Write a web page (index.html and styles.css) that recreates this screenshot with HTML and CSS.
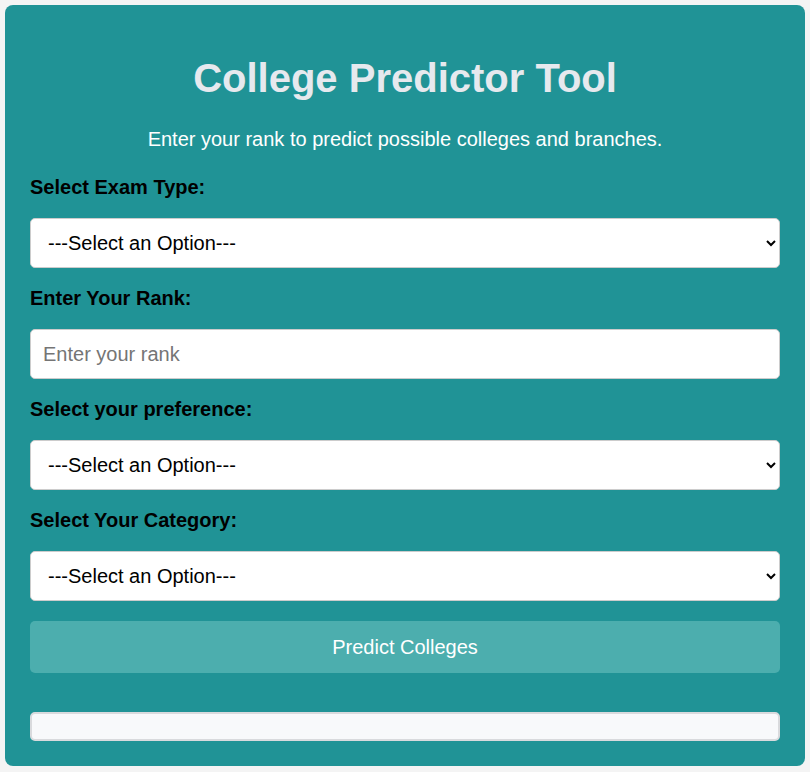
FILE: index.html
```html
<!DOCTYPE html>
<html lang="en">
<head>
<meta charset="utf-8">
<title>College Predictor Tool</title>
<link rel="stylesheet" href="styles.css">
</head>
<body>
<div class="card">
  <h1 class="title">College Predictor Tool</h1>
  <p class="subtitle">Enter your rank to predict possible colleges and branches.</p>
  <form class="form">
    <label class="label" for="exam">Select Exam Type:</label>
    <select class="field select" id="exam"><option>---Select an Option---</option></select>
    <label class="label" for="rank">Enter Your Rank:</label>
    <input class="field" id="rank" type="text" placeholder="Enter your rank">
    <label class="label" for="pref">Select your preference:</label>
    <select class="field select" id="pref"><option>---Select an Option---</option></select>
    <label class="label" for="cat">Select Your Category:</label>
    <select class="field select" id="cat"><option>---Select an Option---</option></select>
    <button class="btn" type="button">Predict Colleges</button>
  </form>
  <div class="result"></div>
</div>
</body>
</html>
```
FILE: styles.css
```css
html, body {
  margin: 0;
  padding: 0;
}
body {
  background: #f4f4f4;
  font-family: "Liberation Sans", Arial, sans-serif;
  padding: 5px;
}
.card {
  background: #209396;
  border-radius: 8px;
  padding: 50px 25px 25px;
  width: 800px;
  box-sizing: border-box;
}
.title {
  margin: 0;
  text-align: center;
  color: #e6e9ee;
  font-size: 40px;
  line-height: 46px;
  font-weight: bold;
}
.subtitle {
  margin: 26px 0 0;
  text-align: center;
  color: #ffffff;
  font-size: 20px;
  line-height: 24px;
}
.form {
  display: flex;
  flex-direction: column;
  gap: 20px;
  margin-top: 26px;
}
.label {
  font-size: 20px;
  line-height: 21px;
  font-weight: bold;
  color: #000;
  margin-top: 0;
}
.field {
  height: 50px;
  box-sizing: border-box;
  border: 1px solid #cccccc;
  border-radius: 5px;
  background: #ffffff;
  font-family: "Liberation Sans", Arial, sans-serif;
  font-size: 20px;
  color: #000;
  padding: 0 12px;
  margin: 0;
  width: 100%;
}
.select {
  padding: 0 12px 0 13px;
}
.field::placeholder {
  color: #757575;
}
.btn {
  height: 52px;
  border: none;
  border-radius: 5px;
  background: #4caeae;
  color: #ffffff;
  font-family: "Liberation Sans", Arial, sans-serif;
  font-size: 20px;
  margin: 0;
}
.result {
  margin-top: 39px;
  height: 29px;
  box-sizing: border-box;
  background: #f8f9fb;
  border: 2px solid #d9dadd;
  border-radius: 5px;
}
```
